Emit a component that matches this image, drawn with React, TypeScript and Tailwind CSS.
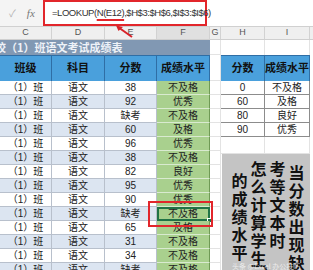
const scores = [
  ["38", "不及格"],
  ["92", "优秀"],
  ["缺考", "不及格"],
  ["60", "及格"],
  ["96", "优秀"],
  ["38", "不及格"],
  ["82", "良好"],
  ["95", "优秀"],
  ["90", "优秀"],
  ["缺考", "不及格"],
  ["65", "及格"],
  ["31", "不及格"],
  ["34", "不及格"],
  ["缺考", "不及格"],
]

const levels = [
  ["0", "不及格"],
  ["60", "及格"],
  ["80", "良好"],
  ["90", "优秀"],
]

// vertical note, left column first
const note = [
  { chars: ["的", "成", "绩", "水", "平"], pad: "pt-[17px]" },
  { chars: ["怎", "么", "计", "算", "学", "生"], pad: "pt-[5px]" },
  { chars: ["考", "等", "文", "本", "时"], pad: "pt-[5px]" },
  { chars: ["当", "分", "数", "出", "现", "缺"], pad: "pt-[9px]" },
]

const letters = [
  { l: "C", w: "w-[52px]" },
  { l: "D", w: "w-[53px]" },
  { l: "E", w: "w-[52px]" },
  { l: "F", w: "w-[53px]" },
  { l: "G", w: "w-[11px]" },
  { l: "H", w: "w-[44px]" },
  { l: "I", w: "w-[45px]" },
]

export default function App() {
  return (
    <div className="relative w-[313px] h-[270px] overflow-hidden bg-white font-['Liberation_Sans','Noto_Sans_CJK_SC',sans-serif] text-[#222]">
      {/* formula bar */}
      <div className="flex h-[27px] border-b border-[#d0d0d0]">
        <div className="w-[43px] bg-[#f4f4f4] flex items-center gap-[11px] pl-[9px] text-[#b0b0b0]">
          <span className="text-[10px]">✓</span>
          <span className="font-['Liberation_Serif',serif] italic text-[11px] text-[#777]">fx</span>
        </div>
        <div className="w-[164px] h-[26px] border-2 border-[#e2262b] flex items-center pl-[7px]">
          <span className="text-[9.5px] tracking-[-0.45px] text-[#333] whitespace-nowrap">
            =LOOKUP(
            <span className="underline decoration-[#e2262b] decoration-[1.5px] underline-offset-[3px]">N(E12)</span>
            ,$H$3:$H$6,$I$3:$I$6)
          </span>
        </div>
        <div className="flex-1" />
      </div>

      {/* column letters */}
      <div className="flex h-[13px] bg-[#efefef] border-b border-[#cfcfcf]">
        {letters.map((c) => (
          <div
            key={c.l}
            className={`${c.w} ${c.l === "F" ? "bg-[#e0e0e0]" : ""} border-r border-[#d2d2d2] flex items-center justify-center text-[9px] text-[#555]`}
          >
            {c.l}
          </div>
        ))}
      </div>

      <div className="flex">
        {/* main table */}
        <div className="w-[210px] shrink-0">
          <div className="h-[15px] bg-[#8198b3] flex items-center overflow-hidden">
            <span className="ml-[-5px] whitespace-nowrap font-['Noto_Sans_CJK_SC',serif] font-bold text-[11px] leading-none text-[#eef2f8]">
              校（1）班语文考试成绩表
            </span>
          </div>
          <div className="grid grid-cols-[52px_53px_52px_53px] h-[26px] bg-[#4aa0dc] border-t border-[#2f6ea5] text-[11px] font-bold text-[#111]">
            {["班级", "科目", "分数", "成绩水平"].map((h) => (
              <div key={h} className="flex items-center justify-center border-r border-[#2f6ea5]">
                {h}
              </div>
            ))}
          </div>
          {scores.map(([score, level], i) => (
            <div
              key={i}
              className={`grid grid-cols-[52px_53px_52px_53px] h-[14px] text-[10px] leading-none ${i % 2 ? "bg-[#dce5f1]" : "bg-white"}`}
            >
              <div className="flex items-center justify-center border-r border-b border-[#b8c0cc]">（1）班</div>
              <div className="flex items-center justify-center border-r border-b border-[#b8c0cc]">语文</div>
              <div className="flex items-center justify-center border-r border-b border-[#b8c0cc]">{score}</div>
              <div
                className={`relative flex items-center justify-center bg-[#a9d08e] border-b border-[#d9ead0] border-r border-r-[#6f9a55] ${i === 9 ? "outline-2 outline-[#217346] -outline-offset-2" : ""}`}
              >
                {level}
                {i === 9 && <span className="absolute right-[-3px] bottom-[-3px] w-[5px] h-[5px] bg-[#217346] border border-white" />}
              </div>
            </div>
          ))}
        </div>

        {/* column G */}
        <div className="w-[11px] shrink-0 flex flex-col">
          {Array.from({ length: 17 }).map((_, i) => (
            <div key={i} className={`${i === 1 ? "h-[26px]" : i === 0 ? "h-[15px]" : "h-[14px]"} border-b border-r border-[#e3e3e3]`} />
          ))}
        </div>

        {/* lookup table + note */}
        <div className="w-[89px] shrink-0">
          <div className="h-[15px] grid grid-cols-[44px_45px]">
            <div className="border-r border-[#e3e3e3]" />
            <div className="border-r border-[#e3e3e3]" />
          </div>
          <div className="grid grid-cols-[44px_45px] h-[26px] bg-[#4aa0dc] border-t border-[#2f6ea5] text-[11px] font-bold text-[#111]">
            <div className="flex items-center justify-center border-r border-[#2f6ea5]">分数</div>
            <div className="flex items-center justify-center border-r border-[#2f6ea5]">成绩水平</div>
          </div>
          {levels.map(([s, l]) => (
            <div key={s} className="grid grid-cols-[44px_45px] h-[14px] text-[10px] leading-none">
              <div className="flex items-center justify-center border-r border-b border-[#8c8c8c]">{s}</div>
              <div className="flex items-center justify-center border-r border-b border-[#8c8c8c]">{l}</div>
            </div>
          ))}
          <div className="h-[17px] grid grid-cols-[44px_45px] border-b border-[#e3e3e3]">
            <div className="border-r border-[#e3e3e3]" />
            <div className="border-r border-[#e3e3e3]" />
          </div>
          <div className="relative ml-[1px] w-[88px] h-[120px] bg-[#c4c4c4] flex pl-[8px] font-['Noto_Sans_CJK_SC',sans-serif] font-bold text-[16px] leading-[18px] text-[#111]">
            {note.map((col, ci) => (
              <div key={ci} className={`w-[19px] flex flex-col items-center ${col.pad}`}>
                {col.chars.map((ch, k) => (
                  <span key={k} className="relative">
                    {ch}
                    {ci === 1 && ch === "生" && (
                      <span className="absolute right-[-9px] bottom-[-6px] text-[14px]">，</span>
                    )}
                  </span>
                ))}
              </div>
            ))}
            <span className="absolute left-[10px] bottom-[4px] text-[7px] font-normal leading-none text-white/70 whitespace-nowrap">
              头条 @Excel 办公技巧
            </span>
          </div>
        </div>
      </div>

      {/* annotations */}
      <div className="absolute left-[148px] top-[201px] w-[65px] h-[26px] border-2 border-[#e2262b]" />
      <svg className="absolute left-0 top-0 pointer-events-none" width="313" height="270">
        <line x1="132" y1="37" x2="118" y2="27" stroke="#d8232a" strokeWidth="2" />
        <path d="M116 25.5 L123 27 L118.5 31 Z" fill="#d8232a" />
      </svg>
    </div>
  )
}
